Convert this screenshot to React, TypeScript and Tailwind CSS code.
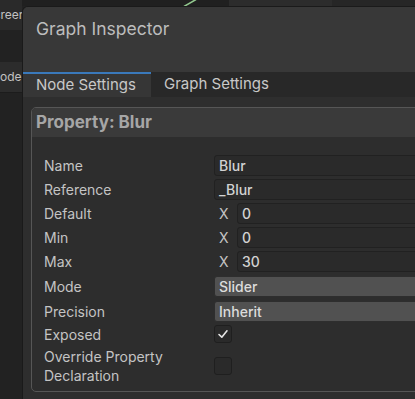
import React from "react";

const font = { fontFamily: 'Inter, "Noto Sans", sans-serif' };

const Label = ({ children }: { children: React.ReactNode }) => (
  <div className="w-[170px] shrink-0 text-[14px] leading-[19px] text-[#c4c4c4]">{children}</div>
);

const TextField = ({ value }: { value: string }) => (
  <div className="flex-1 h-[21px] rounded-[3px] border border-[#212121] bg-[#2a2a2a] pl-[4px] flex items-center text-[14px] font-medium text-[#d2d2d2]">
    {value}
  </div>
);

const VecField = ({ value }: { value: string }) => (
  <div className="flex-1 flex items-center">
    <span className="w-[23px] pl-[5px] text-[14px] text-[#c4c4c4]">X</span>
    <div className="flex-1 h-[21px] rounded-[3px] border border-[#212121] bg-[#2a2a2a] pl-[4px] flex items-center text-[14px] font-medium text-[#d2d2d2]">
      {value}
    </div>
  </div>
);

const Dropdown = ({ value }: { value: string }) => (
  <div className="flex-1 h-[21px] rounded-[3px] border border-[#2e2e2e] bg-[#515151] pl-[4px] flex items-center text-[14px] font-medium text-[#dcdcdc]">
    {value}
  </div>
);

const Checkbox = ({ checked }: { checked?: boolean }) => (
  <div className="w-[18px] h-[18px] rounded-[3px] border border-[#1f1f1f] bg-[#2a2a2a] flex items-center justify-center">
    {checked && (
      <svg width="12" height="12" viewBox="0 0 12 12">
        <polyline points="2,6.5 4.8,9.2 10,2.8" fill="none" stroke="#e6e6e6" strokeWidth="1.6" strokeLinecap="round" strokeLinejoin="round" />
      </svg>
    )}
  </div>
);

const Row = ({ label, children, h = 24 }: { label: React.ReactNode; children: React.ReactNode; h?: number }) => (
  <div className="flex items-center" style={{ height: h }}>
    <Label>{label}</Label>
    {children}
  </div>
);

export default function App() {
  return (
    <div className="w-[415px] h-[399px] overflow-hidden flex bg-[#222222]" style={font}>
      {/* left strip behind the window */}
      <div className="w-[22px] shrink-0 flex flex-col overflow-hidden">
        <div className="h-[30px] bg-[#2a2a2a] flex items-center whitespace-nowrap text-[12px] text-[#c2c2c2]">
          <span className="ml-[-14px]">Screen</span>
        </div>
        <div className="h-[32px] bg-[#222222]" />
        <div className="h-[31px] bg-[#2c2c2c] border-b border-[#1c1c1c] flex items-center whitespace-nowrap text-[12px] text-[#c2c2c2]">
          <span className="ml-[-9px]">Node</span>
        </div>
        <div className="flex-1 bg-[#222222]" />
      </div>

      <div className="flex-1 flex flex-col min-w-0">
        {/* top strip */}
        <div className="h-[6px] shrink-0 flex bg-[#202020]">
          <div className="w-[161px]" />
          <svg width="14" height="6" viewBox="0 0 14 6">
            <line x1="1" y1="6.5" x2="13" y2="-0.5" stroke="#93c98f" strokeWidth="1.5" />
          </svg>
          <div className="w-[32px]" />
          <div className="w-[103px] bg-[#2c2c2c]" />
          <div className="flex-1 bg-[#262626]" />
        </div>

        {/* Graph Inspector window */}
        <div className="flex-1 flex flex-col border-l border-t border-[#1a1a1a] rounded-tl-[6px] bg-[#2e2e2e] overflow-hidden">
          <div className="h-[65px] shrink-0 bg-[#383838] pl-[13px] pt-[10px]">
            <div className="text-[17.5px] leading-[24px] text-[#bdbdbd]">Graph Inspector</div>
          </div>

          <div className="h-[25px] shrink-0 flex bg-[#282828]">
            <div className="w-[128px] bg-[#363636] border-t-2 border-[#3a79bb] pl-[13px] flex items-center text-[15px] text-[#c8c8c8]">
              Node Settings
            </div>
            <div className="pl-[13px] flex items-center text-[15px] text-[#c8c8c8]">Graph Settings</div>
          </div>

          <div className="pl-[8px] pt-[10px] mr-[-12px]">
            <div className="rounded-[5px] border border-[#565656] bg-[#2d2d2d] overflow-hidden">
              <div className="h-[29px] bg-[#3a3a3a] pl-[4px] flex items-center text-[17px] font-bold text-[#a6a6a6]">
                Property: Blur
              </div>
              <div className="pl-[12px] pt-[16px] pb-[4px]">
                <Row label="Name"><TextField value="Blur" /></Row>
                <Row label="Reference"><TextField value="_Blur" /></Row>
                <Row label="Default"><VecField value="0" /></Row>
                <Row label="Min"><VecField value="0" /></Row>
                <Row label="Max" h={25}><VecField value="30" /></Row>
                <Row label="Mode" h={25}><Dropdown value="Slider" /></Row>
                <Row label="Precision" h={24}><Dropdown value="Inherit" /></Row>
                <Row label="Exposed" h={22}><Checkbox checked /></Row>
                <Row label={<>Override Property<br />Declaration</>} h={42}><Checkbox /></Row>
              </div>
            </div>
          </div>
        </div>
      </div>
    </div>
  );
}
